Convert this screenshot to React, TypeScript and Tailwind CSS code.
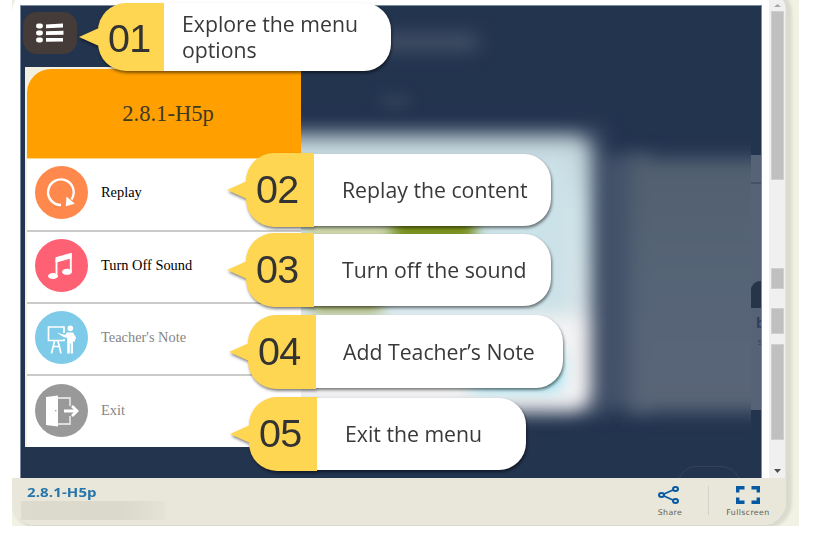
import type { ReactNode } from "react";

const serif = "font-['Liberation_Serif',serif]";

type RowProps = { label: string; color: string; size: string; muted?: boolean; children: ReactNode };

function MenuRow({ label, color, size, muted, children }: RowProps) {
  return (
    <div className={`flex shrink-0 items-center gap-[13px] border-[#cbcbcb] pl-[8px] ${size}`}>
      <span className={`mb-[3px] flex h-[53px] w-[53px] items-center justify-center rounded-full ${color}`}>{children}</span>
      <span className={`${serif} mb-[2px] text-[14.4px] ${muted ? "text-[#858585]" : "text-black"}`}>{label}</span>
    </div>
  );
}

function ReplayIcon() {
  return (
    <svg width="53" height="53" viewBox="0 0 53 53" fill="none">
      <path d="M26 39A12.8 12.8 0 1 1 36.4 33.5" stroke="#fff" strokeWidth="2.4" />
      <path d="M30.8 40.3L31.5 30.5L39.8 37.8Z" fill="#fff" />
    </svg>
  );
}

function MusicIcon() {
  return (
    <svg width="53" height="53" viewBox="0 0 53 53" fill="none">
      <path d="M21.5 37V20.5L35.8 16.2V32.5" stroke="#fff" strokeWidth="1.9" />
      <path d="M20.6 18.2L36.7 13.8V19.3L20.6 23.8Z" fill="#fff" />
      <ellipse cx="18" cy="37" rx="5" ry="3" fill="#fff" />
      <ellipse cx="32" cy="32.8" rx="5" ry="3" fill="#fff" />
    </svg>
  );
}

function TeacherIcon() {
  return (
    <svg width="53" height="53" viewBox="0 0 53 53" fill="none">
      <path d="M29 22V16H13.5V29.5H29V28M19.5 30L16.5 42.5M23 30L26 42.5M18 35.5H24.5" stroke="#fff" strokeWidth="1.7" />
      <circle cx="35.3" cy="17.3" r="2.8" fill="#fff" />
      <path d="M32 21.5H38L41 26.5L39.5 31L38 30V42.5H35.7V32.5H34.8V42.5H32.2V26.8L29 26.3L21.5 21.5L30 24Z" fill="#fff" />
    </svg>
  );
}

function ExitIcon() {
  return (
    <svg width="53" height="53" viewBox="0 0 53 53" fill="none">
      <path d="M23 14H35V22M35 32V40H23" stroke="#dedede" strokeWidth="1.8" />
      <path d="M11 13L23 11.5V42.5L11 41Z" fill="#fff" />
      <circle cx="20.8" cy="26.8" r="0.8" fill="#999" />
      <path d="M29 27H41" stroke="#fff" strokeWidth="2.8" />
      <path d="M37 22L42 27L37 32" stroke="#fff" strokeWidth="2.8" />
    </svg>
  );
}

type CalloutProps = { number: string; place: string; tab: string; size: string; children: ReactNode };

function Callout({ number, place, tab, size, children }: CalloutProps) {
  return (
    <div className={`absolute flex drop-shadow-[1px_2px_1.5px_rgba(0,0,0,0.5)] ${place}`}>
      <svg width="20" height="18" viewBox="0 0 20 18" className="mt-auto mb-auto -mr-px shrink-0">
        <path d="M0 9L20 0V18Z" fill="#ffd651" />
      </svg>
      <div className={`flex shrink-0 items-center rounded-l-[28px] bg-[#ffd651] font-['Liberation_Sans',sans-serif] text-[39.5px] leading-none tracking-[-0.6px] text-[#333] ${tab}`}>
        {number}
      </div>
      <div className={`flex items-center rounded-r-[27px] bg-white font-['Open_Sans',sans-serif] text-[21.25px] leading-[26px] text-[#393939] ${size}`}>
        <span className="whitespace-nowrap">{children}</span>
      </div>
    </div>
  );
}

function MenuPanel() {
  return (
    <div className="ml-[5px] flex h-[380px] w-[276px] flex-col bg-[#f2f0e2] pt-[2px] pl-[2px]">
      <div className={`${serif} flex h-[90px] shrink-0 items-center justify-center rounded-tl-[24px] border-b border-[#ffd88a] bg-[#ffa000] pl-[8px] text-[22.6px] text-[#3d3a28]`}>
        2.8.1-H5p
      </div>
      <div className="flex h-[288px] flex-col bg-white">
        <MenuRow label="Replay" color="bg-[#ff894d]" size="h-[73px] border-b-2 pb-px"><ReplayIcon /></MenuRow>
        <MenuRow label="Turn Off Sound" color="bg-[#ff6174]" size="h-[72px] border-b-2"><MusicIcon /></MenuRow>
        <MenuRow label="Teacher's Note" color="bg-[#7dcae9]" size="h-[72px] border-b-2" muted><TeacherIcon /></MenuRow>
        <MenuRow label="Exit" color="bg-[#999]" size="h-[71px]" muted><ExitIcon /></MenuRow>
      </div>
    </div>
  );
}

function Backdrop() {
  return (
    <div className="absolute inset-0 overflow-hidden">
      <div className="absolute top-[28px] left-[345px] h-[16px] w-[112px] bg-[#465268] blur-[9px]" />
      <div className="absolute top-[90px] left-[360px] h-[10px] w-[28px] bg-[#34465c] blur-[7px]" />
      <div className="absolute top-0 left-0 h-full w-[730px] overflow-hidden">
        <div className="absolute top-[122px] left-[240px] h-[286px] w-[342px] bg-[#435169] blur-[9px]" />
        <div className="absolute top-[148px] left-[570px] h-[256px] w-[60px] bg-[#435169] blur-[9px]" />
        <div className="absolute top-[152px] left-[608px] h-[254px] w-[180px] bg-linear-to-b from-[#515f70] via-[#566477] to-[#596477] blur-[9px]" />
        <div className="absolute top-[130px] left-[240px] h-[275px] w-[330px] overflow-hidden rounded-[18px] bg-linear-to-b from-[#bdcdd4] via-[#cfe4e9] via-25% to-[#e4e5e9] blur-[9px]">
          <div className="absolute top-[18px] left-0 h-[160px] w-[308px] bg-[#cbe2e8]" />
          <div className="absolute top-[180px] left-[20px] h-[96px] w-[313px] bg-[#f3f3f4]" />
        </div>
        <div className="absolute top-[218px] left-[285px] h-[15px] w-[90px] bg-[#c9cf91] blur-[7px]" />
        <div className="absolute top-[207px] left-[371px] h-[30px] w-[83px] bg-[#788d16] blur-[7px]" />
        <div className="absolute top-[287px] left-[290px] h-[18px] w-[70px] bg-[#99a044] blur-[7px]" />
        <div className="absolute top-[345px] left-[450px] h-[36px] w-[88px] bg-[#68d8ee] blur-[9px]" />
      </div>
      <div className="absolute top-[149px] left-[730px] h-[255px] w-[11px] overflow-hidden bg-[#566376]">
        <div className="mt-[27px] h-[2px] bg-[#435169]" />
        <div className="mt-[97px] h-[27px] rounded-tl-[9px] bg-[#273549]" />
        <div className="mt-[3px] pl-[5px] font-['Open_Sans',sans-serif] text-[14px] leading-[24px] font-bold text-[#2b405d]">b</div>
        <div className="pl-[7px] font-['Open_Sans',sans-serif] text-[9px] leading-[14px] text-[#2b405d]">s</div>
      </div>
      <div className="absolute top-[460px] left-[656px] h-[40px] w-[64px] rounded-[28px] border border-[#32435b]" />
    </div>
  );
}

function ScrollThumb({ size }: { size: string }) {
  return <div className={`ml-[2px] w-[13px] shrink-0 border border-[#cfcfcf] bg-[#c0c0c0] ${size}`} />;
}

export default function App() {
  return (
    <div className="relative h-[540px] w-[813px] overflow-hidden bg-white pl-[12px]">
      <div className="h-[526px] w-[787px] overflow-hidden bg-[#f1f2e3]">
        <div className="-mt-[12px] flex h-[537px] w-[774px] flex-col overflow-hidden rounded-[24px] bg-white pt-[12px] shadow-[3px_1px_3px_3px_#dadbce]">
          <div className="flex h-[478px] shrink-0">
            <div className="relative mt-[5px] ml-[8px] w-[742px] shrink-0 border-t border-r border-l border-[#7b8ca0] bg-[#23344f]">
              <Backdrop />
              <div className="relative flex flex-col">
                <div className="mt-[6px] ml-[2px] flex h-[42px] w-[54px] items-center justify-center rounded-[14px] bg-[#453b38]">
                  <svg width="29" height="22" viewBox="0 0 29 22" fill="#fff" className="mr-[2px]">
                    <rect x="1" y="1.5" width="7" height="5" rx="2.4" />
                    <rect x="1" y="8.5" width="7" height="5" rx="2.4" />
                    <rect x="1" y="15.5" width="7" height="5" rx="2.4" />
                    <path d="M11 2.4L28 1.6V5.6L11 6.3ZM11 9.3L28.5 8.7V12.8L11 13.1ZM11 16L28 16V19.6L11 19.8Z" />
                  </svg>
                </div>
                <div className="mt-[13px] -ml-px"><MenuPanel /></div>
              </div>
            </div>
            <div className="ml-[7px] flex w-[17px] flex-col border-r border-[#e4e4e4] bg-[#f0f0f0]">
              <div className="mt-[4px] ml-[5px] h-[3px] w-[7px] bg-[#a6a6a6] [clip-path:polygon(50%_0,100%_100%,0_100%)]" />
              <div className="mt-[4px]"><ScrollThumb size="h-[169px]" /></div>
              <div className="mt-[88px]"><ScrollThumb size="h-[21px]" /></div>
              <div className="mt-[19px]"><ScrollThumb size="h-[26px]" /></div>
              <div className="mt-[10px]"><ScrollThumb size="h-[96px]" /></div>
              <div className="mt-[29px] ml-[5px] h-[4px] w-[7px] bg-[#505050] [clip-path:polygon(0_0,100%_0,50%_100%)]" />
            </div>
          </div>
          <div className="flex h-[47px] shrink-0 justify-between bg-[#e9e7d9]">
            <div className="pl-[9px]">
              <div className="h-[23px] origin-left scale-x-[1.2] pt-[6px] pl-[5px] font-['Open_Sans',sans-serif] text-[12.5px] leading-[18px] font-bold tracking-[0.1px] text-[#2675ab]">2.8.1-H5p</div>
              <div className="h-[19px] w-[144px] bg-linear-to-r from-[#dddbce] via-[#dad9cc] via-70% to-[#e5e3d5]" />
            </div>
            <div className="flex pt-[7px] pr-[15px] font-['DejaVu_Sans',sans-serif] text-[7.8px] text-[#5d5d58]">
              <div className="flex w-[40px] flex-col items-center">
                <svg width="24" height="20" viewBox="0 0 24 20" fill="none" stroke="#0759a3" strokeWidth="2" className="mr-[2px]">
                  <path d="M17 4.5L7 9M7 11L17 15.5" strokeWidth="1.7" />
                  <ellipse cx="4.5" cy="10" rx="2.5" ry="1.9" />
                  <ellipse cx="18.5" cy="4" rx="2.5" ry="1.9" />
                  <ellipse cx="18.5" cy="16" rx="2.5" ry="1.9" />
                </svg>
                <span className="mt-[3px] leading-[9px] tracking-[0.4px]">Share</span>
              </div>
              <div className="mt-[1px] ml-[18px] h-[29px] w-px bg-[#d1d2cb]" />
              <div className="ml-[16px] flex w-[46px] flex-col items-center">
                <svg width="24" height="20" viewBox="0 0 24 20" fill="none" stroke="#0759a3" strokeWidth="3.4">
                  <path d="M1.7 7.5V2.7H8.5M15.5 2.7H22.3V7.5M22.3 12.5V17.3H15.5M8.5 17.3H1.7V12.5" />
                </svg>
                <span className="mt-[3px] leading-[9px] tracking-[0.4px]">Fullscreen</span>
              </div>
            </div>
          </div>
        </div>
      </div>

      <Callout number="01" place="left-[79px] top-[3px] h-[68px]" tab="w-[66px] pt-[3px] pl-[10px]" size="w-[227px] pl-[18px]">
        Explore the menu<br />options
      </Callout>
      <Callout number="02" place="left-[227px] top-[153px] h-[74px]" tab="w-[68px] pl-[10px]" size="my-px w-[237px] pl-[28px]">Replay the content</Callout>
      <Callout number="03" place="left-[227px] top-[233px] h-[74px]" tab="w-[68px] pl-[10px]" size="my-px w-[237px] pl-[28px]">Turn off the sound</Callout>
      <Callout number="04" place="left-[229px] top-[315px] h-[74px]" tab="w-[68px] pl-[10px]" size="mb-px w-[247px] pl-[27px]">Add Teacher’s Note</Callout>
      <Callout number="05" place="left-[230px] top-[397px] h-[74px]" tab="w-[68px] pl-[10px]" size="my-px w-[209px] pl-[28px]">Exit the menu</Callout>
    </div>
  );
}
